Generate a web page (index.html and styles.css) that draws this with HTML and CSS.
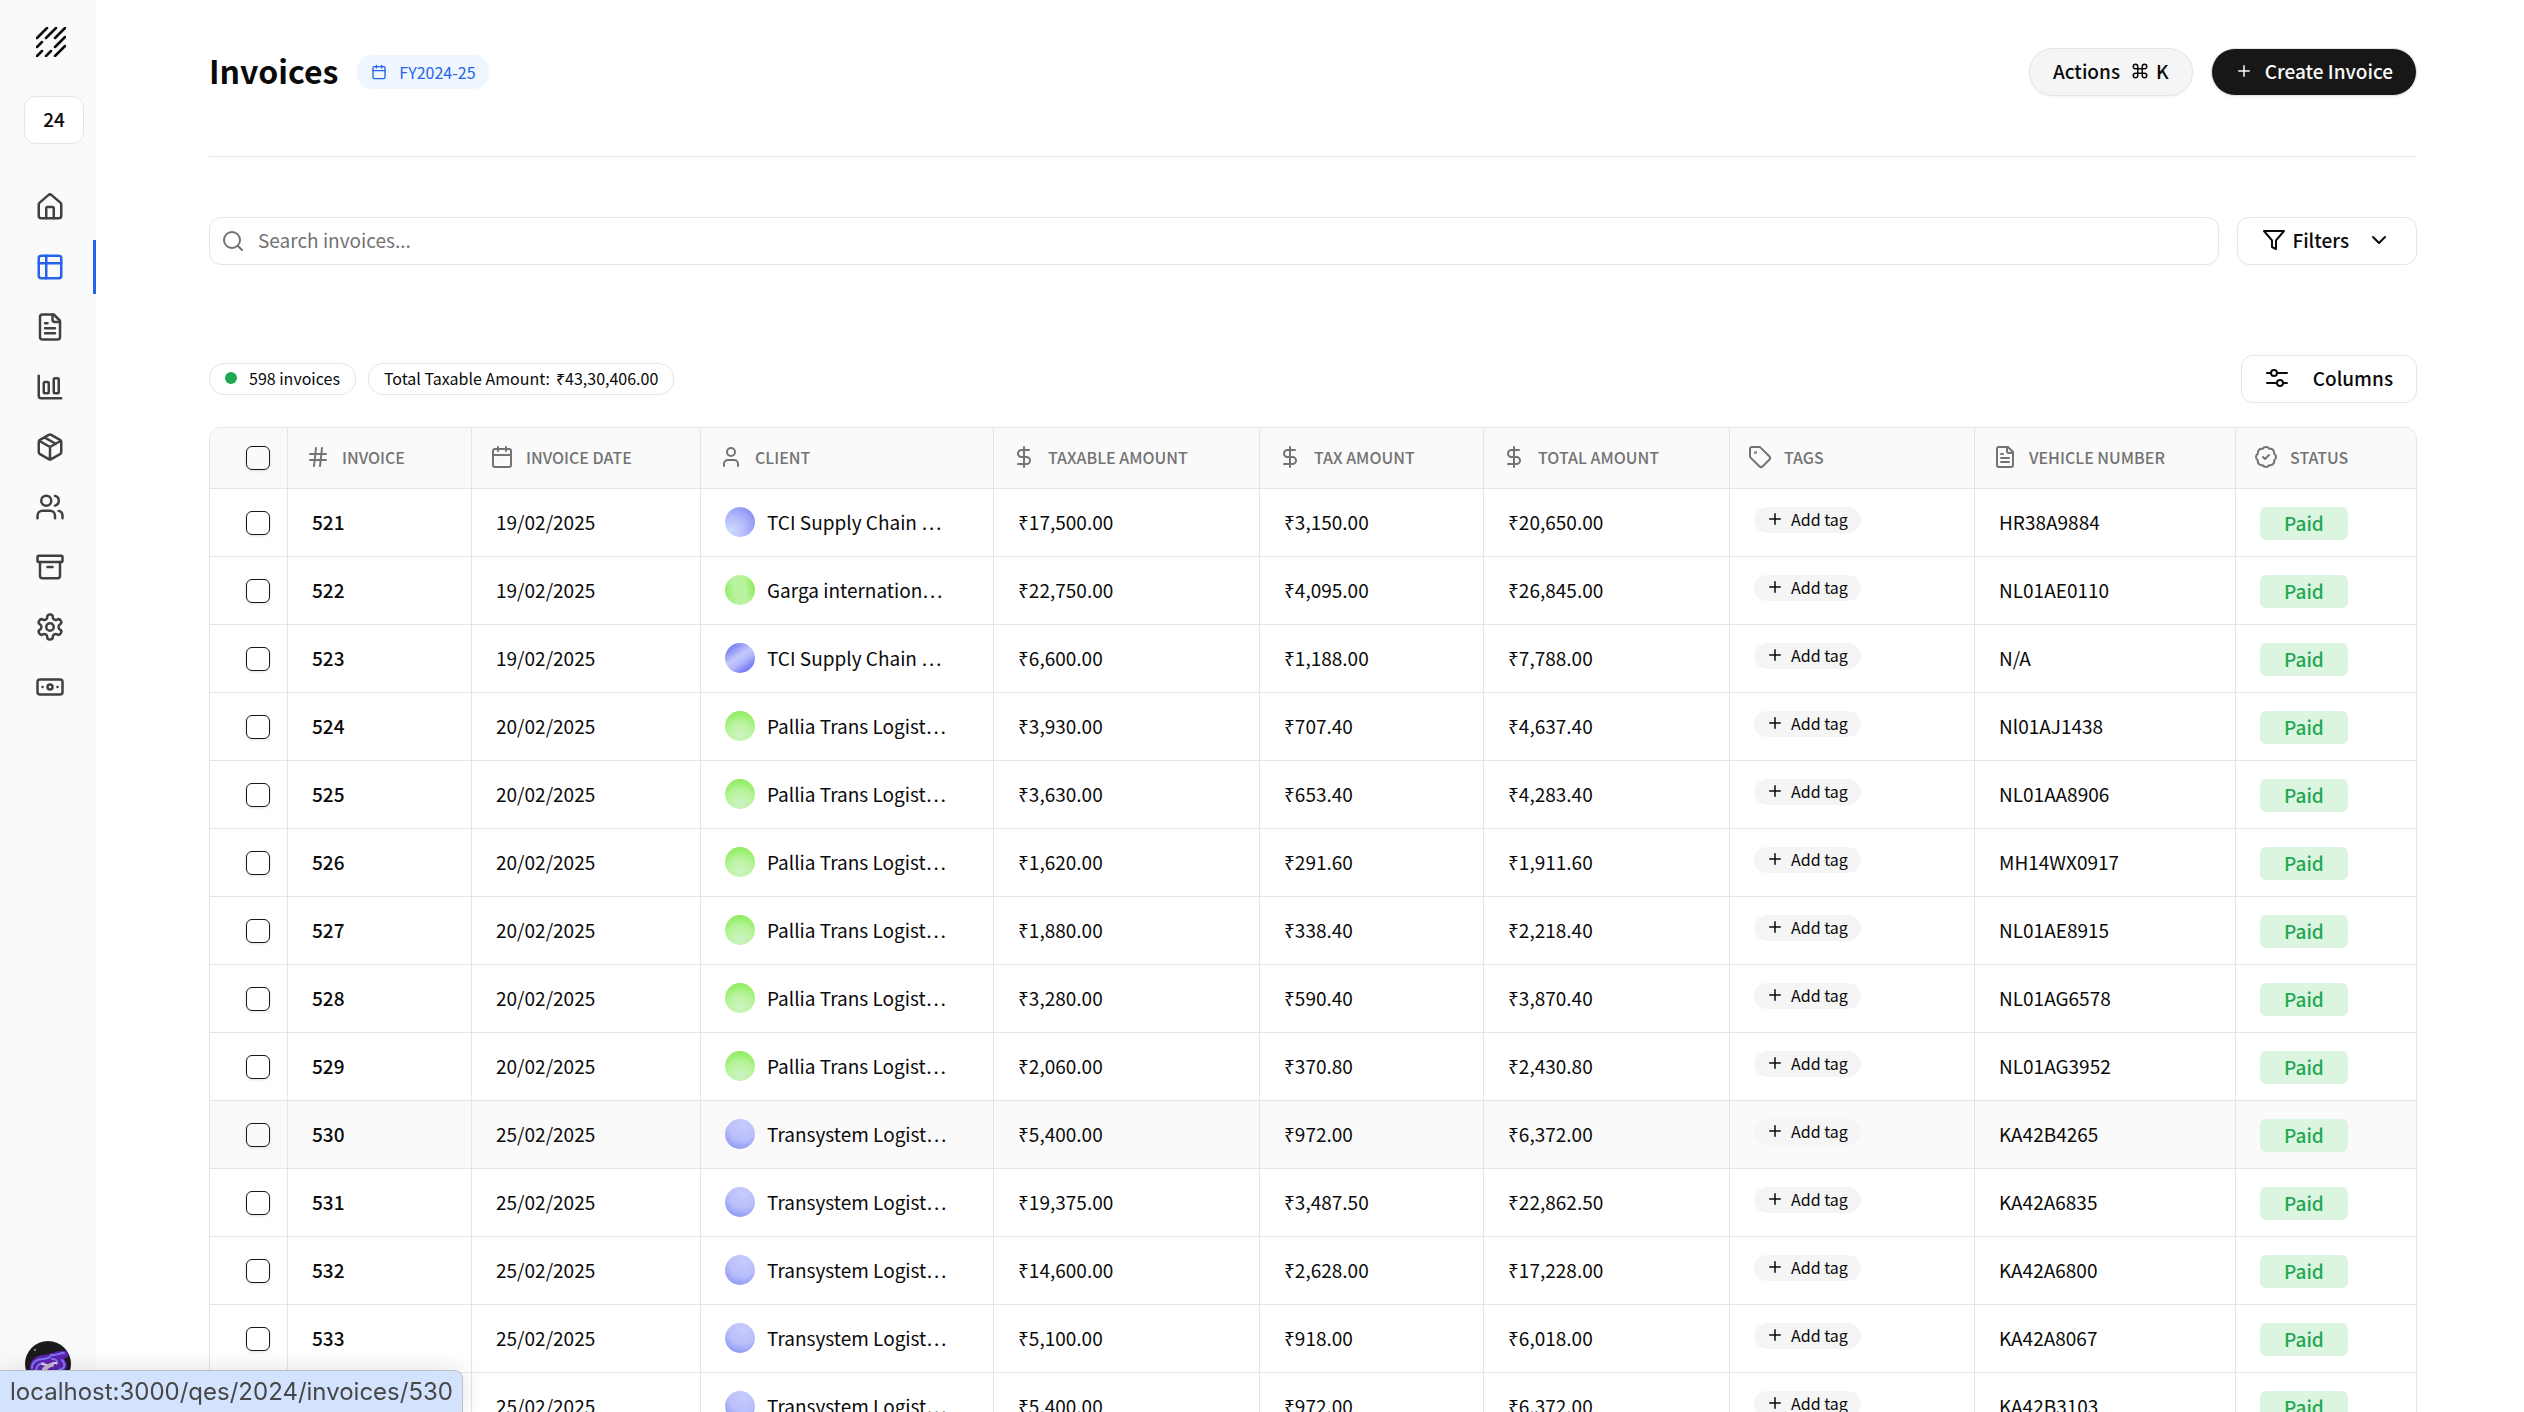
FILE: index.html
```
<!DOCTYPE html>
<html lang="en">
<head>
    <meta charset="UTF-8">
    <meta name="viewport" content="width=device-width, initial-scale=1.0">
    <title>Invoices</title>
    <link rel="stylesheet" href="styles.css">
</head>
<body>

<!-- icon set -->
<svg class="sprite" aria-hidden="true">
    <symbol id="i-home" viewBox="0 0 24 24"><path d="M15 21v-8a1 1 0 0 0-1-1h-4a1 1 0 0 0-1 1v8"/><path d="M3 10a2 2 0 0 1 .709-1.528l7-6a2 2 0 0 1 2.582 0l7 6A2 2 0 0 1 21 10v9a2 2 0 0 1-2 2H5a2 2 0 0 1-2-2z"/></symbol>
    <symbol id="i-table" viewBox="0 0 24 24"><rect x="3" y="3" width="18" height="18" rx="2"/><path d="M3 9h18M9 3v18"/></symbol>
    <symbol id="i-file" viewBox="0 0 24 24"><path d="M15 2H6a2 2 0 0 0-2 2v16a2 2 0 0 0 2 2h12a2 2 0 0 0 2-2V7Z"/><path d="M14 2v4a2 2 0 0 0 2 2h4M10 9H8M16 13H8M16 17H8"/></symbol>
    <symbol id="i-chart" viewBox="0 0 24 24"><path d="M3 3v16a2 2 0 0 0 2 2h16"/><rect x="15" y="5" width="4" height="12" rx="1"/><rect x="7" y="8" width="4" height="9" rx="1"/></symbol>
    <symbol id="i-package" viewBox="0 0 24 24"><path d="m7.5 4.27 9 5.15M21 8a2 2 0 0 0-1-1.73l-7-4a2 2 0 0 0-2 0l-7 4A2 2 0 0 0 3 8v8a2 2 0 0 0 1 1.73l7 4a2 2 0 0 0 2 0l7-4A2 2 0 0 0 21 16ZM3.3 7l8.7 5 8.7-5M12 22V12"/></symbol>
    <symbol id="i-users" viewBox="0 0 24 24"><path d="M16 21v-2a4 4 0 0 0-4-4H6a4 4 0 0 0-4 4v2"/><circle cx="9" cy="7" r="4"/><path d="M22 21v-2a4 4 0 0 0-3-3.87M16 3.13a4 4 0 0 1 0 7.75"/></symbol>
    <symbol id="i-archive" viewBox="0 0 24 24"><rect x="2" y="3" width="20" height="5" rx="1"/><path d="M4 8v11a2 2 0 0 0 2 2h12a2 2 0 0 0 2-2V8M10 12h4"/></symbol>
    <symbol id="i-settings" viewBox="0 0 24 24"><path d="M12.22 2h-.44a2 2 0 0 0-2 2v.18a2 2 0 0 1-1 1.73l-.43.25a2 2 0 0 1-2 0l-.15-.08a2 2 0 0 0-2.73.73l-.22.38a2 2 0 0 0 .73 2.73l.15.1a2 2 0 0 1 1 1.72v.51a2 2 0 0 1-1 1.74l-.15.09a2 2 0 0 0-.73 2.73l.22.38a2 2 0 0 0 2.73.73l.15-.08a2 2 0 0 1 2 0l.43.25a2 2 0 0 1 1 1.73V20a2 2 0 0 0 2 2h.44a2 2 0 0 0 2-2v-.18a2 2 0 0 1 1-1.73l.43-.25a2 2 0 0 1 2 0l.15.08a2 2 0 0 0 2.73-.73l.22-.39a2 2 0 0 0-.73-2.73l-.15-.08a2 2 0 0 1-1-1.74v-.5a2 2 0 0 1 1-1.74l.15-.09a2 2 0 0 0 .73-2.73l-.22-.38a2 2 0 0 0-2.73-.73l-.15.08a2 2 0 0 1-2 0l-.43-.25a2 2 0 0 1-1-1.73V4a2 2 0 0 0-2-2z"/><circle cx="12" cy="12" r="3"/></symbol>
    <symbol id="i-banknote" viewBox="0 0 24 24"><rect x="2" y="6" width="20" height="12" rx="2"/><circle cx="12" cy="12" r="2"/><path d="M6 12h.01M18 12h.01"/></symbol>
    <symbol id="i-calendar" viewBox="0 0 24 24"><path d="M8 2v4M16 2v4M3 10h18"/><rect x="3" y="4" width="18" height="18" rx="2"/></symbol>
    <symbol id="i-hash" viewBox="0 0 24 24"><path d="M4 9h16M4 15h16M10 3 8 21M16 3l-2 18"/></symbol>
    <symbol id="i-user" viewBox="0 0 24 24"><path d="M19 21v-2a4 4 0 0 0-4-4H9a4 4 0 0 0-4 4v2"/><circle cx="12" cy="7" r="4"/></symbol>
    <symbol id="i-dollar" viewBox="0 0 24 24"><path d="M12 2v20M17 5H9.500a3.500 3.500 0 0 0 0 7h5a3.500 3.500 0 0 1 0 7H6"/></symbol>
    <symbol id="i-tag" viewBox="0 0 24 24"><path d="M12.586 2.586A2 2 0 0 0 11.172 2H4a2 2 0 0 0-2 2v7.172a2 2 0 0 0 .586 1.414l8.704 8.704a2.426 2.426 0 0 0 3.420 0l6.580-6.580a2.426 2.426 0 0 0 0-3.420z"/><circle cx="7.500" cy="7.500" r=".5"/></symbol>
    <symbol id="i-badge" viewBox="0 0 24 24"><path d="M3.850 8.620a4 4 0 0 1 4.780-4.770 4 4 0 0 1 6.740 0 4 4 0 0 1 4.780 4.780 4 4 0 0 1 0 6.740 4 4 0 0 1-4.770 4.780 4 4 0 0 1-6.750 0 4 4 0 0 1-4.780-4.770 4 4 0 0 1 0-6.760Z"/><path d="m9 12 2 2 4-4"/></symbol>
    <symbol id="i-search" viewBox="0 0 24 24"><circle cx="11" cy="11" r="8"/><path d="m21 21-4.300-4.300"/></symbol>
    <symbol id="i-plus" viewBox="0 0 24 24"><path d="M5 12h14M12 5v14"/></symbol>
    <symbol id="i-filter" viewBox="0 0 24 24"><path d="M22 3H2l8 9.460V19l4 2v-8.540z"/></symbol>
    <symbol id="i-chevron" viewBox="0 0 24 24"><path d="m6 9 6 6 6-6"/></symbol>
    <symbol id="i-sliders" viewBox="0 0 24 24"><path d="M2 7h4M12 7h10M2 17h10M18 17h4"/><circle cx="9" cy="7" r="3"/><circle cx="15" cy="17" r="3"/></symbol>
    <symbol id="i-command" viewBox="0 0 24 24"><path d="M15 6v12a3 3 0 1 0 3-3H6a3 3 0 1 0 3 3V6a3 3 0 1 0-3 3h12a3 3 0 1 0-3-3"/></symbol>
</svg>

<div class="app">
    <aside class="sidebar">
        <a class="logo" href="#" aria-label="Home page">
            <svg viewBox="0 0 30 30"><path d="M1 11 11 1M10 11 20 1M19 11 29 1M1 20l5-5M19 20 29 10M1 29l5-5M10 29l5-5M19 29 29 19"/></svg>
        </a>
        <button class="year-button" type="button">24</button>
        <nav class="nav">
            <a class="nav-link" href="#" aria-label="Home"><svg class="icon"><use href="#i-home"/></svg></a>
            <a class="nav-link active" href="#" aria-label="Invoices"><svg class="icon"><use href="#i-table"/></svg></a>
            <a class="nav-link" href="#" aria-label="Documents"><svg class="icon"><use href="#i-file"/></svg></a>
            <a class="nav-link" href="#" aria-label="Reports"><svg class="icon"><use href="#i-chart"/></svg></a>
            <a class="nav-link" href="#" aria-label="Products"><svg class="icon"><use href="#i-package"/></svg></a>
            <a class="nav-link" href="#" aria-label="Clients"><svg class="icon"><use href="#i-users"/></svg></a>
            <a class="nav-link" href="#" aria-label="Archive"><svg class="icon"><use href="#i-archive"/></svg></a>
            <a class="nav-link" href="#" aria-label="Settings"><svg class="icon"><use href="#i-settings"/></svg></a>
            <a class="nav-link" href="#" aria-label="Payments"><svg class="icon"><use href="#i-banknote"/></svg></a>
        </nav>
        <button class="avatar" type="button" aria-label="Account">
            <svg viewBox="0 0 46 46">
                <circle cx="23" cy="23" r="23" fill="#1b1a1d"/>
                <g fill="none" stroke-linecap="round">
                    <path d="M6 30c-2-9 5-15 13-15 8 0 13-6 22-4 4 3-1 6-5 7 6 3 6 8 2 12-8 6-27 7-32 0z" fill="#5f22ae" stroke="#5f22ae" stroke-width="2"/>
                    <path d="M7 27c0-6 5-9 11-9 3 0 5-1 7-2M26 14c5 1 8-2 13-2M37 19c4 4 3 9-3 10M11 29c1-5 4-7 8-7M27 18c4 0 6 2 5 5" stroke="#7f78f5" stroke-width="2"/>
                    <path d="M18 29c2 0 4-1 5-3 1-3 4-4 8-4M17 23l5 1" stroke="#e2dce6" stroke-width="2"/>
                    <path d="M19 28c2-1 5-4 8-4" stroke="#c3b9cc" stroke-width="4"/>
                </g>
                <circle cx="10" cy="9" r="1" fill="#aaa"/>
            </svg>
        </button>
    </aside>

    <main class="main">
        <header class="page-header">
            <h1>Invoices</h1>
            <span class="fy-badge"><svg class="icon"><use href="#i-calendar"/></svg>FY2024-25</span>
            <div class="header-actions">
                <button class="btn btn-secondary" type="button">Actions <kbd><svg class="icon"><use href="#i-command"/></svg>K</kbd></button>
                <button class="btn btn-primary" type="button"><svg class="icon"><use href="#i-plus"/></svg>Create Invoice</button>
            </div>
        </header>

        <div class="toolbar">
            <label class="search">
                <svg class="icon"><use href="#i-search"/></svg>
                <input type="text" placeholder="Search invoices..." aria-label="Search invoices">
            </label>
            <button class="btn btn-filters" type="button"><svg class="icon"><use href="#i-filter"/></svg>Filters<svg class="icon chevron"><use href="#i-chevron"/></svg></button>
        </div>

        <div class="summary">
            <span class="pill"><i class="dot"></i>598 invoices</span>
            <span class="pill">Total Taxable Amount: <span>₹43,30,406.00</span></span>
            <button class="btn btn-columns" type="button"><svg class="icon"><use href="#i-sliders"/></svg>Columns</button>
        </div>

        <div class="table-wrap">
            <table>
                <colgroup>
                    <col class="c-check"><col class="c-invoice"><col class="c-date"><col class="c-client"><col class="c-taxable">
                    <col class="c-tax"><col class="c-total"><col class="c-tags"><col class="c-vehicle"><col class="c-status">
                </colgroup>
                <thead>
                    <tr>
                        <th class="check"><input type="checkbox" aria-label="Select all"></th>
                        <th><div class="th"><svg class="icon"><use href="#i-hash"/></svg>INVOICE</div></th>
                        <th><div class="th"><svg class="icon"><use href="#i-calendar"/></svg>INVOICE DATE</div></th>
                        <th><div class="th"><svg class="icon"><use href="#i-user"/></svg>CLIENT</div></th>
                        <th><div class="th"><svg class="icon"><use href="#i-dollar"/></svg>TAXABLE AMOUNT</div></th>
                        <th><div class="th"><svg class="icon"><use href="#i-dollar"/></svg>TAX AMOUNT</div></th>
                        <th><div class="th"><svg class="icon"><use href="#i-dollar"/></svg>TOTAL AMOUNT</div></th>
                        <th><div class="th"><svg class="icon"><use href="#i-tag"/></svg>TAGS</div></th>
                        <th><div class="th"><svg class="icon"><use href="#i-file"/></svg>VEHICLE NUMBER</div></th>
                        <th><div class="th"><svg class="icon"><use href="#i-badge"/></svg>STATUS</div></th>
                    </tr>
                </thead>
                <tbody id="invoiceRows"></tbody>
            </table>
        </div>
    </main>
</div>

<div class="status-bar">localhost:3000/qes/2024/invoices/530</div>

<script>
    const clients = {
        tciA: ["TCI Supply Chain …", "orb-tci"],
        tciB: ["TCI Supply Chain …", "orb-tci-alt"],
        garga: ["Garga internation…", "orb-garga"],
        pallia: ["Pallia Trans Logist…", "orb-pallia"],
        transystem: ["Transystem Logist…", "orb-transystem"]
    };

    // number, date, client, taxable, tax, total, vehicle
    const invoices = [
        [521, "19/02/2025", "tciA", "17,500.00", "3,150.00", "20,650.00", "HR38A9884"],
        [522, "19/02/2025", "garga", "22,750.00", "4,095.00", "26,845.00", "NL01AE0110"],
        [523, "19/02/2025", "tciB", "6,600.00", "1,188.00", "7,788.00", "N/A"],
        [524, "20/02/2025", "pallia", "3,930.00", "707.40", "4,637.40", "Nl01AJ1438"],
        [525, "20/02/2025", "pallia", "3,630.00", "653.40", "4,283.40", "NL01AA8906"],
        [526, "20/02/2025", "pallia", "1,620.00", "291.60", "1,911.60", "MH14WX0917"],
        [527, "20/02/2025", "pallia", "1,880.00", "338.40", "2,218.40", "NL01AE8915"],
        [528, "20/02/2025", "pallia", "3,280.00", "590.40", "3,870.40", "NL01AG6578"],
        [529, "20/02/2025", "pallia", "2,060.00", "370.80", "2,430.80", "NL01AG3952"],
        [530, "25/02/2025", "transystem", "5,400.00", "972.00", "6,372.00", "KA42B4265"],
        [531, "25/02/2025", "transystem", "19,375.00", "3,487.50", "22,862.50", "KA42A6835"],
        [532, "25/02/2025", "transystem", "14,600.00", "2,628.00", "17,228.00", "KA42A6800"],
        [533, "25/02/2025", "transystem", "5,100.00", "918.00", "6,018.00", "KA42A8067"],
        [534, "25/02/2025", "transystem", "5,400.00", "972.00", "6,372.00", "KA42B3103"]
    ];

    const hovered = 530;

    document.getElementById("invoiceRows").innerHTML = invoices.map(([no, date, key, taxable, tax, total, vehicle]) => {
        const [name, orb] = clients[key];
        return `<tr class="${no === hovered ? "hovered" : ""}">
            <td class="check"><input type="checkbox" aria-label="Select invoice ${no}"></td>
            <td class="number">${no}</td>
            <td>${date}</td>
            <td><div class="client"><span class="orb ${orb}"></span>${name}</div></td>
            <td>₹${taxable}</td>
            <td>₹${tax}</td>
            <td>₹${total}</td>
            <td class="tags"><button class="add-tag" type="button"><svg class="icon"><use href="#i-plus"/></svg>Add tag</button></td>
            <td>${vehicle}</td>
            <td class="status"><span class="paid">Paid</span></td>
        </tr>`;
    }).join("");
</script>

</body>
</html>
```
FILE: styles.css
```
* {
    box-sizing: border-box;
}
body {
    margin: 0;
    height: 100vh;
    overflow: hidden;
    background: #fff;
    color: #0a0a0a;
    font-family: "Noto Sans CJK SC", "Noto Sans", sans-serif;
    font-size: 19px;
    line-height: 30px;
}
button, input, kbd {
    font: inherit;
    color: inherit;
}
button {
    cursor: pointer;
}
.sprite {
    display: none;
}
.icon {
    width: 24px;
    height: 24px;
    flex: none;
    fill: none;
    stroke: currentColor;
    stroke-width: 2;
    stroke-linecap: round;
    stroke-linejoin: round;
}
.app {
    display: flex;
    height: 100vh;
}

/* Sidebar */
.sidebar {
    width: 96px;
    flex: none;
    display: flex;
    flex-direction: column;
    background: #fafafa;
    padding: 27px 0 25px;
}
.logo {
    height: 30px;
    margin-left: 36px;
}
.logo svg {
    width: 30px;
    height: 30px;
    fill: none;
    stroke: #0a0a0a;
    stroke-width: 2.5;
    stroke-linecap: round;
}
.year-button {
    width: 60px;
    height: 48px;
    margin: 39px 0 0 24px;
    padding: 0 0 2px;
    border: 1px solid #e5e5e5;
    border-radius: 12px;
    background: #fff;
    font-weight: 500;
}
.nav {
    display: flex;
    flex-direction: column;
    gap: 6px;
    margin-top: 36px;
}
.nav-link {
    display: flex;
    align-items: center;
    height: 54px;
    padding-left: 35px;
    color: #404044;
}
.nav-link .icon {
    width: 30px;
    height: 30px;
}
.nav-link.active {
    color: #2563eb;
    border-right: 3px solid #2563eb;
}
.avatar {
    width: 46px;
    height: 46px;
    margin: auto 0 0 25px;
    padding: 0;
    border: 0;
    border-radius: 50%;
    background: none;
}
.avatar svg {
    display: block;
}

/* Main */
.main {
    flex: 1;
    min-width: 0;
    padding: 0 107px 0 113px;
}
.page-header {
    display: flex;
    align-items: center;
    padding: 48px 0 60px;
    border-bottom: 1px solid #e5e5e5;
}
h1 {
    margin: 0;
    padding-bottom: 4px;
    font-size: 32px;
    font-weight: 700;
    line-height: 44px;
}
.fy-badge {
    display: flex;
    align-items: center;
    gap: 12px;
    height: 34px;
    margin-left: 19px;
    padding: 0 13px 1px 14px;
    border-radius: 15px;
    background: #eff6ff;
    color: #2563eb;
    font-size: 16px;
}
.fy-badge .icon {
    width: 16px;
    height: 16px;
}
.header-actions {
    display: flex;
    gap: 18px;
    margin-left: auto;
}
.btn {
    display: flex;
    align-items: center;
    height: 48px;
    border: 1px solid #e5e5e5;
    border-radius: 12px;
    background: #fff;
    font-weight: 500;
    padding: 0 24px 2px;
}
.btn-secondary {
    gap: 11px;
    padding: 0 23px 2px;
    border-radius: 24px;
    background: #f5f5f5;
    box-shadow: 0 1px 3px rgba(0, 0, 0, 0.06);
}
.btn-secondary kbd {
    display: flex;
    align-items: center;
    gap: 7px;
}
.btn-secondary .icon {
    width: 18px;
    height: 18px;
}
.btn-primary {
    gap: 12px;
    padding: 0 23px 2px;
    border-radius: 24px;
    background: #171717;
    color: #fafafa;
    box-shadow: 0 1px 3px rgba(0, 0, 0, 0.06);
}
.btn-primary .icon {
    width: 18px;
    height: 18px;
}
.toolbar {
    display: flex;
    gap: 18px;
    margin-top: 60px;
}
.search {
    flex: 1;
    display: flex;
    align-items: center;
    gap: 13px;
    height: 48px;
    padding: 0 11px;
    border: 1px solid #e5e5e5;
    border-radius: 12px;
    color: #737373;
}
.search input {
    flex: 1;
    border: 0;
    outline: 0;
    padding: 0 0 2px;
    background: none;
    color: #0a0a0a;
}
.search input::placeholder {
    color: #737373;
    opacity: 1;
}
.btn-filters {
    gap: 6px;
    padding: 0 25px 2px 24px;
}
.btn-filters .chevron {
    margin-left: 12px;
}
.summary {
    display: flex;
    align-items: center;
    gap: 12px;
    margin: 90px 0 24px;
}
.pill {
    display: flex;
    align-items: center;
    gap: 6px;
    height: 32px;
    padding: 0 15px 2px;
    border: 1px solid #e5e5e5;
    border-radius: 15px;
    font-size: 16px;
}
.dot {
    width: 12px;
    height: 12px;
    margin-right: 6px;
    border-radius: 50%;
    background: #1fa851;
}
.btn-columns {
    gap: 24px;
    padding: 0 23px 2px;
    margin-left: auto;
}

/* Table */
.table-wrap {
    border: 1px solid #e5e5e5;
    border-radius: 12px;
    overflow: hidden;
}
table {
    width: 100%;
    table-layout: fixed;
    border-collapse: separate;
    border-spacing: 0;
}
.c-check { width: 78px; }
.c-invoice { width: 184px; }
.c-date { width: 229px; }
.c-client { width: 293px; }
.c-taxable { width: 266px; }
.c-tax { width: 224px; }
.c-total { width: 246px; }
.c-tags { width: 245px; }
.c-vehicle { width: 261px; }
.c-status { width: 180px; }
th, td {
    padding: 0 24px 2px;
    border-right: 1px solid #e5e5e5;
    border-bottom: 1px solid #e5e5e5;
    text-align: left;
    white-space: nowrap;
    overflow: hidden;
}
th:last-child, td:last-child {
    border-right: 0;
}
th {
    height: 61px;
    padding: 0 18px 2px;
    background: #fafafa;
    color: #737373;
    font-size: 16px;
    font-weight: 500;
}
.th {
    display: flex;
    align-items: center;
    gap: 12px;
}
td {
    height: 68px;
}
.hovered td {
    background: #fafafa;
}
.check {
    padding: 0 0 0 36px;
}
.check input {
    appearance: none;
    display: block;
    width: 24px;
    height: 24px;
    margin: 0;
    border: 1px solid #171717;
    border-radius: 6px;
    box-shadow: 0 1px 3px rgba(0, 0, 0, 0.12);
}
.number {
    font-weight: 500;
}
.client {
    display: flex;
    align-items: center;
    gap: 12px;
}
.orb {
    width: 30px;
    height: 30px;
    flex: none;
    border-radius: 50%;
}
.orb-tci {
    background: radial-gradient(circle at 20% 80%, #ccdcff 0%, #b7bcfb 40%, #9da5f6 65%, #7a80f2 95%);
}
.orb-tci-alt {
    background: linear-gradient(145deg, #7a80f2 15%, #c4c9fb 45%, #b3b8fa 60%, #7a80f2 80%);
}
.orb-garga {
    background: linear-gradient(80deg, #95ee68 5%, #baf39f 35%, #baf39f 65%, #90ed60 90%);
}
.orb-pallia {
    background: radial-gradient(circle at 50% 80%, #ccf3c4 0%, #b8f39c 45%, #97ee6c 75%, #8aec58 100%);
}
.orb-transystem {
    background: radial-gradient(circle at 60% 20%, #c6ccfb 0%, #b9bffa 50%, #9aa1f6 75%, #767cf1 95%);
}
.tags {
    padding-bottom: 6px;
}
.add-tag {
    display: flex;
    align-items: center;
    gap: 7px;
    height: 26px;
    padding: 0 13px 1px 12px;
    border: 0;
    border-radius: 13px;
    background: #f5f5f5;
    font-size: 16px;
    line-height: 24px;
}
.add-tag .icon {
    width: 18px;
    height: 18px;
}
.status {
    padding-bottom: 0;
}
.paid {
    display: inline-block;
    height: 33px;
    padding: 0 24px;
    border-radius: 6px;
    background: #dcf5e1;
    color: #1fa851;
    font-weight: 500;
    line-height: 32px;
    vertical-align: middle;
}

/* Browser link preview */
.status-bar {
    position: fixed;
    left: 0;
    bottom: 0;
    height: 42px;
    padding: 0 9px 0 10px;
    border-top: 1px solid #b9bec8;
    border-right: 1px solid #b9bec8;
    border-top-right-radius: 9px;
    background: #d3e2fd;
    color: #474747;
    box-shadow: 0 0 24px rgba(0, 0, 0, 0.12);
    font-family: Inter, sans-serif;
    font-size: 24px;
    line-height: 42px;
}
```
